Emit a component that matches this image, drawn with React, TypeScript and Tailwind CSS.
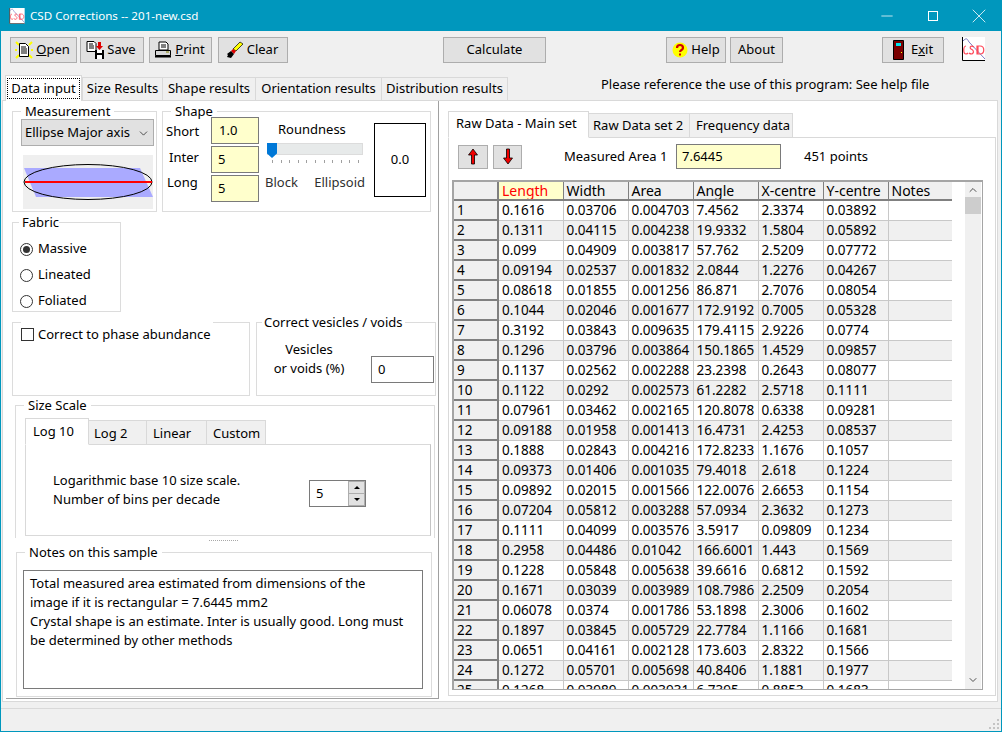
import { ChevronDown, ChevronUp, Minus, X } from "lucide-react";
import type { ReactNode } from "react";

const font = "font-['Noto_Sans','Open_Sans',sans-serif]";

const columns = ["Length", "Width", "Area", "Angle", "X-centre", "Y-centre", "Notes"];

const rows = [
  ["0.1616", "0.03706", "0.004703", "7.4562", "2.3374", "0.03892"],
  ["0.1311", "0.04115", "0.004238", "19.9332", "1.5804", "0.05892"],
  ["0.099", "0.04909", "0.003817", "57.762", "2.5209", "0.07772"],
  ["0.09194", "0.02537", "0.001832", "2.0844", "1.2276", "0.04267"],
  ["0.08618", "0.01855", "0.001256", "86.871", "2.7076", "0.08054"],
  ["0.1044", "0.02046", "0.001677", "172.9192", "0.7005", "0.05328"],
  ["0.3192", "0.03843", "0.009635", "179.4115", "2.9226", "0.0774"],
  ["0.1296", "0.03796", "0.003864", "150.1865", "1.4529", "0.09857"],
  ["0.1137", "0.02562", "0.002288", "23.2398", "0.2643", "0.08077"],
  ["0.1122", "0.0292", "0.002573", "61.2282", "2.5718", "0.1111"],
  ["0.07961", "0.03462", "0.002165", "120.8078", "0.6338", "0.09281"],
  ["0.09188", "0.01958", "0.001413", "16.4731", "2.4253", "0.08537"],
  ["0.1888", "0.02843", "0.004216", "172.8233", "1.1676", "0.1057"],
  ["0.09373", "0.01406", "0.001035", "79.4018", "2.618", "0.1224"],
  ["0.09892", "0.02015", "0.001566", "122.0076", "2.6653", "0.1154"],
  ["0.07204", "0.05812", "0.003288", "57.0934", "2.3632", "0.1273"],
  ["0.1111", "0.04099", "0.003576", "3.5917", "0.09809", "0.1234"],
  ["0.2958", "0.04486", "0.01042", "166.6001", "1.443", "0.1569"],
  ["0.1228", "0.05848", "0.005638", "39.6616", "0.6812", "0.1592"],
  ["0.1671", "0.03039", "0.003989", "108.7986", "2.2509", "0.2054"],
  ["0.06078", "0.0374", "0.001786", "53.1898", "2.3006", "0.1602"],
  ["0.1897", "0.03845", "0.005729", "22.7784", "1.1166", "0.1681"],
  ["0.0651", "0.04161", "0.002128", "173.603", "2.8322", "0.1566"],
  ["0.1272", "0.05701", "0.005698", "40.8406", "1.1881", "0.1977"],
  ["0.1268", "0.03989", "0.003931", "6.7395", "0.8853", "0.1683"],
];

function OpenIcon() {
  return (
    <svg width="18" height="18" viewBox="0 0 18 18">
      <path d="M1 1l3 3M17 1l-3 3M1 17l3-3M17 17l-3-3M0 9h2M16 9h2" stroke="#ffff00" strokeWidth="2" />
      <path d="M4.500 2.500h6l3 3v10h-9z" fill="#fff" stroke="#000" />
      <path d="M6 6h5M6 8h6M6 10h6M6 12h6" stroke="#000" />
    </svg>
  );
}

function SaveIcon() {
  return (
    <svg width="18" height="18" viewBox="0 0 18 18">
      <path d="M1 0.500h7l2 2v8H1z" fill="#fff" stroke="#000" />
      <path d="M3 3h4M3 5h5M3 7h5" stroke="#000" />
      <path d="M9 9h9v9H9z" fill="#000" />
      <path d="M11 9h5v3h-5zM11 14h5v4h-5z" fill="#fff" />
      <path d="M12 1h3v4h2l-3.500 4L10 5h2z" fill="#e00000" />
    </svg>
  );
}

function PrintIcon() {
  return (
    <svg width="18" height="18" viewBox="0 0 18 18">
      <path d="M5 1h7l2 2v6H5z" fill="#fff" stroke="#000" />
      <path d="M7 4h5M7 6h5" stroke="#000" />
      <path d="M1.500 9.500h15v5h-15z" fill="#d8d8d8" stroke="#000" />
      <path d="M1 15.500h16" stroke="#000" strokeWidth="2" />
      <path d="M12 11h3" stroke="#808000" />
    </svg>
  );
}

function ClearIcon() {
  return (
    <svg width="18" height="18" viewBox="0 0 18 18">
      <path d="M14 1l3 2-7 7-3-2z" fill="#ffff00" stroke="#000" strokeWidth="0.7" />
      <path d="M7 8l3 2-2 3-3-3z" fill="#e00000" />
      <path d="M5 10l3 3-3 4-4-1 1-2-1-1z" fill="#000" />
    </svg>
  );
}

function HelpIcon() {
  return (
    <svg width="16" height="16" viewBox="0 0 16 16">
      <circle cx="8" cy="8" r="7.500" fill="#ffff00" />
      <path d="M5 6c0-4 6-4 6 0 0 2-3 2-3 4" fill="none" stroke="#d00000" strokeWidth="2.200" />
      <path d="M7 11.500h2v2H7z" fill="#d00000" />
    </svg>
  );
}

function ExitIcon() {
  return (
    <svg width="11" height="20" viewBox="0 0 11 20">
      <path d="M0.500 0.500h10v19h-10z" fill="#7a0000" stroke="#000" />
      <path d="M3 3h5v3H3z" fill="#00e8f0" />
      <path d="M8 12h1v1H8z" fill="#ffff00" />
    </svg>
  );
}

function CsdLogo({ small }: { small?: boolean }) {
  return (
    <svg width={small ? 16 : 23} height={small ? 16 : 24} viewBox="0 0 23 24">
      <path d="M0 0h23v24H0z" fill="#fff" />
      <path d="M0.500 0v23.500H23" fill="none" stroke="#000" />
      <path d="M1 4c3-3 4-3 6 1l16 17" fill="none" stroke="#7a7ac0" />
      <path d="M4 9c-3 0-3 8 0 8 1 0 2-1 2-1M12 10c-3-2-5 0-3 2 2 1 4 3 1 5-1 0-2 0-3-1M15 9h3c5 0 5 8 0 8h-3zM16 9v8" fill="none" stroke="#ff4a5a" strokeWidth="1.200" />
    </svg>
  );
}

function Measurement() {
  return (
    <svg width="130" height="54" viewBox="0 0 130 54">
      <path d="M0 0h130v54H0z" fill="#efefef" />
      <path d="M1 13h116l13 29H13z" fill="#aaaaff" />
      <ellipse cx="65" cy="27" rx="64" ry="17.500" fill="none" stroke="#000" />
      <path d="M2 27h127" stroke="#ff0000" strokeWidth="2" />
    </svg>
  );
}

function ArrowIcon({ down }: { down?: boolean }) {
  return (
    <svg width="10" height="17" viewBox="0 0 10 17">
      <path d={down ? "M3.500 1h3v9H9.500L5 16 0.500 10h3z" : "M5 1l4.500 6h-3v9h-3V7h-3z"} fill="#f00000" stroke="#000" strokeWidth="0.800" />
    </svg>
  );
}

function ToolButton({ className, children }: { className: string; children: ReactNode }) {
  return (
    <button className={`h-[26px] flex items-center justify-center gap-[3px] bg-[#e1e1e1] border border-[#adadad] shrink-0 ${className}`}>
      {children}
    </button>
  );
}

function Group({ title, className, titleClass, children }: { title?: string; className: string; titleClass?: string; children: ReactNode }) {
  return (
    <fieldset className={`border border-[#dcdcdc] min-w-0 shrink-0 ${className}`}>
      <legend className={`leading-[18px] h-[18px] px-1 ${titleClass ?? "ml-2"}`}>{title}</legend>
      {children}
    </fieldset>
  );
}

function Field({ value, className }: { value: string; className: string }) {
  return (
    <div className={`border border-[#7a7a7a] flex items-center ${className}`}>{value}</div>
  );
}

function Radio({ label, checked }: { label: string; checked?: boolean }) {
  return (
    <div className="h-[26px] flex items-center gap-[5px] pl-[7px]">
      <span className="w-[13px] h-[13px] rounded-full border border-[#333] flex items-center justify-center">
        {checked && <span className="w-[7px] h-[7px] rounded-full bg-[#333]" />}
      </span>
      {label}
    </div>
  );
}

function TopTab({ label, className, active }: { label: string; className: string; active?: boolean }) {
  return active ? (
    <div className={`h-[26px] -mb-px bg-white border border-b-0 border-[#d9d9d9] flex items-center justify-center z-10 ${className}`}>
      <span className="border border-dotted border-black px-[3px] leading-[19px]">{label}</span>
    </div>
  ) : (
    <div className={`h-[23px] bg-[#f0f0f0] border border-b-0 border-[#d9d9d9] flex items-center justify-center ${className}`}>
      {label}
    </div>
  );
}

function SubTab({ label, className, active }: { label: string; className: string; active?: boolean }) {
  return (
    <div className={`border border-[#d9d9d9] flex items-center whitespace-nowrap ${active ? "h-[27px] -mb-px border-b-white bg-white z-10 pb-[2px]" : "h-[24px] border-b-0 bg-[#f0f0f0]"} ${className}`}>
      {label}
    </div>
  );
}

function LeftPanel() {
  return (
    <div className="w-[433px] ml-[3px] shrink-0 border-r border-b border-[#a0a0a0] pl-[6px] pt-[1px] h-[598px]">
      <div className="flex gap-[5px]">
        <Group title="Measurement" className="w-[145px] h-[110px] pl-[8px]" titleClass="ml-0">
          <div className="w-[133px] h-[27px] -mt-[1px] pt-px bg-[#e1e1e1] border border-[#adadad] flex items-center justify-between pl-[3px] pr-[3px]">
            Ellipse Major axis
            <ChevronDown size={13} strokeWidth={1.2} />
          </div>
          <div className="mt-[9px] ml-[2px]"><Measurement /></div>
        </Group>
        <Group title="Shape" className="w-[269px] h-[110px]" titleClass="ml-[8px]">
          <div className="flex">
            <div className="w-[48px] pl-[3px] -mt-[2px]">
              <div className="h-[26px] leading-[26px]">Short</div>
              <div className="h-[26px] leading-[26px] pl-[3px]">Inter</div>
              <div className="h-[26px] leading-[24px] pl-[1px]">Long</div>
            </div>
            <div className="w-[48px] -mt-[3px]">
              <Field value="1.0" className="h-[27px] bg-[#ffffcc] pl-[7px] mb-[2px]" />
              <Field value="5" className="h-[27px] bg-[#ffffcc] pl-[6px] mb-[2px]" />
              <Field value="5" className="h-[27px] bg-[#ffffcc] pl-[6px]" />
            </div>
            <div className="w-[115px] pl-[6px] -mt-[3px]">
              <div className="pl-[13px] leading-[24px]">Roundness</div>
              <div className="relative h-[12px] w-[96px] ml-[2px] bg-[#e7eaea] border border-[#dcdcdc] mt-[2px]">
                <span className="absolute -left-px -top-[1px] w-[10px] h-[15px] bg-[#0078d7] [clip-path:polygon(0_0,100%_0,100%_70%,50%_100%,0_70%)]" />
              </div>
              <div className="flex justify-between w-[87px] ml-[7px] mt-[5px]">
                {Array.from({ length: 11 }, (_, i) => (
                  <span key={i} className="w-px h-[3px] bg-[#a0a0a0]" />
                ))}
              </div>
              <div className="flex justify-between w-[100px] mt-[10px] text-[#303030]">
                <span>Block</span>
                <span>Ellipsoid</span>
              </div>
            </div>
            <div className="w-[52px] h-[74px] border border-black flex items-center justify-center mt-[3px]">0.0</div>
          </div>
        </Group>
      </div>

      <div className="mt-[1px]">
        <Group title="Fabric" className="w-[109px] h-[99px]" titleClass="ml-[6px] pl-[3px] pr-0">
          <div className="mt-[5px]">
            <Radio label="Massive" checked />
            <Radio label="Lineated" />
            <Radio label="Foliated" />
          </div>
        </Group>
      </div>

      <div className="flex gap-[6px] mt-[1px]">
        <Group className="w-[238px] h-[83px]" titleClass="ml-[8px] w-[192px]">
          <div className="flex items-center gap-[4px] pl-[8px] -mt-[6px]">
            <span className="w-[13px] h-[13px] border border-[#333]" />
            Correct to phase abundance
          </div>
        </Group>
        <Group title="Correct vesicles / voids" className="w-[180px] h-[83px]" titleClass="ml-[5px] px-[2px]">
          <div className="flex">
            <div className="w-[104px] text-center leading-[19px] pt-[9px]">
              <div>Vesicles</div>
              <div>or voids (%)</div>
            </div>
            <Field value="0" className="w-[63px] h-[27px] pl-[6px] mt-[25px] ml-[10px]" />
          </div>
        </Group>
      </div>

      <div className="ml-[3px]">
        <fieldset className="w-[420px] h-[142px] border border-b-0 border-[#dcdcdc] pl-[9px]">
          <legend className="-ml-px px-1 leading-[18px] h-[18px]">Size Scale</legend>
          <div className="flex h-[26px] items-end mt-[4px]">
            <SubTab label="Log 10" active className="w-[64px] pl-[7px] pt-[2px]" />
            <SubTab label="Log 2" className="w-[59px] -ml-px pl-[5px] pt-[2px]" />
            <SubTab label="Linear" className="w-[61px] -ml-px pl-[6px] pt-[2px]" />
            <SubTab label="Custom" className="w-[60px] -ml-px pl-[6px] pt-[2px]" />
          </div>
          <div className="w-[406px] h-[92px] border border-[#d9d9d9] border-r-[#c4c4c4] flex pl-[27px] pt-[26px]">
            <div className="w-[256px] leading-[19px]">
              <div>Logarithmic base 10 size scale.</div>
              <div>Number of bins per decade</div>
            </div>
            <div className="w-[57px] h-[27px] border border-[#7a7a7a] flex justify-between items-center pl-[6px] mt-[9px]">
              5
              <div className="w-[17px] h-full flex flex-col gap-px bg-[#adadad] p-px">
                <span className="flex-1 bg-[#e1e1e1] flex items-center justify-center">
                  <span className="border-x-[3px] border-x-transparent border-b-[3px] border-b-black" />
                </span>
                <span className="flex-1 bg-[#e1e1e1] flex items-center justify-center">
                  <span className="border-x-[3px] border-x-transparent border-t-[3px] border-t-black" />
                </span>
              </div>
            </div>
          </div>
        </fieldset>
      </div>
      <div className="h-[5px] flex justify-center items-center w-[420px] ml-[1px]">
        <span className="w-[29px] border-t border-dotted border-[#a8a8a8]" />
      </div>
      <div className="ml-[4px]">
        <fieldset className="w-[416px] h-[154px] border border-[#dcdcdc] pl-[6px]">
          <legend className="ml-[2px] px-1 leading-[18px] h-[18px]">Notes on this sample</legend>
          <div className="w-[400px] h-[119px] border border-[#7a7a7a] px-[6px] pt-[3px] leading-[19px] mt-[9px]">
            <div>Total measured area estimated from dimensions of the</div>
            <div>image if it is rectangular = 7.6445 mm2</div>
            <div>Crystal shape is an estimate. Inter is usually good. Long must</div>
            <div>be determined by other methods</div>
          </div>
        </fieldset>
      </div>
    </div>
  );
}

function DataGrid() {
  return (
    <div className="mx-[3px] mt-[8px] w-[531px] h-[510px] border-2 border-[#a5a5a5] border-r border-b flex overflow-hidden text-[13.5px]">
      <div className="w-[498px] shrink-0 overflow-hidden">
        <table className="table-fixed border-collapse w-[498px] leading-[17px] -mt-px">
          <colgroup>
            <col className="w-[44px]" />
            <col className="w-[65px]" />
            <col className="w-[65px]" />
            <col className="w-[65px]" />
            <col className="w-[65px]" />
            <col className="w-[65px]" />
            <col className="w-[65px]" />
            <col className="w-[64px]" />
          </colgroup>
          <thead>
            <tr className="h-[19px] border-b-2 border-[#808080]">
              <th className="bg-[#f0f0f0] border-r-2 border-[#808080]" />
              {columns.map((c) => (
                <th
                  key={c}
                  className={`font-normal text-[14px] text-left pl-[3px] border-r border-[#808080] whitespace-nowrap overflow-hidden ${c === "Length" ? "bg-[#ffffcc] text-[#ff0000]" : "bg-[#f0f0f0]"}`}
                >
                  {c}
                </th>
              ))}
            </tr>
          </thead>
          <tbody>
            {rows.map((r, i) => (
              <tr key={i} className={`h-[20px] border-b border-[#c8c8c8] ${i % 2 === 1 ? "bg-[#f0f0f0]" : "bg-white"}`}>
                <td className="bg-[#f0f0f0] border-r-2 border-b-2 border-[#808080] pl-[3px]">{i + 1}</td>
                {r.map((v, j) => (
                  <td key={j} className="pl-[3px] border-r border-[#c8c8c8] whitespace-nowrap overflow-hidden">{v}</td>
                ))}
                <td className="border-r border-[#c8c8c8]" />
              </tr>
            ))}
          </tbody>
        </table>
      </div>
      <div className="flex-1 flex justify-end pr-[1px] bg-white">
        <div className="w-[16px] h-full bg-[#f0f0f0] flex flex-col items-center">
          <ChevronUp size={12} strokeWidth={2} className="mt-[2px] text-[#505050]" />
          <div className="w-full h-[17px] bg-[#cdcdcd] mt-[1px]" />
          <div className="flex-1" />
          <ChevronDown size={12} strokeWidth={2} className="mb-[3px] text-[#505050]" />
        </div>
      </div>
    </div>
  );
}

function RightPanel() {
  return (
    <div className="flex-1 pl-[9px] pt-[9px] h-[598px]">
      <div className="flex items-end h-[27px]">
        <SubTab label="Raw Data - Main set" active className="w-[141px] pl-[7px]" />
        <SubTab label="Raw Data set 2" className="w-[102px] -ml-px pl-[4px]" />
        <SubTab label="Frequency data" className="w-[104px] -ml-px pl-[6px]" />
      </div>
      <div className="w-[548px] h-[559px] border border-[#d9d9d9] bg-white">
        <div className="flex items-center h-[31px] mt-[3px] pl-[9px]">
          <button className="w-[30px] h-[24px] bg-[#e1e1e1] border border-[#adadad] flex items-center justify-center"><ArrowIcon /></button>
          <button className="w-[29px] h-[24px] ml-[5px] bg-[#e1e1e1] border border-[#adadad] flex items-center justify-center"><ArrowIcon down /></button>
          <span className="ml-[42px] w-[112px]">Measured Area 1</span>
          <Field value="7.6445" className="w-[105px] h-[25px] bg-[#ffffcc] pl-[5px]" />
          <span className="ml-[23px]">451 points</span>
        </div>
        <DataGrid />
      </div>
    </div>
  );
}

export default function App() {
  return (
    <div className={`w-[1002px] h-[732px] bg-[#f0f0f0] border border-t-0 border-[#0097bd] overflow-hidden text-[13px] text-black ${font}`}>
      <div className="h-[31px] -mx-px bg-[#0097bd] flex items-center text-white pl-[9px]">
        <CsdLogo small />
        <span className="ml-[5px] text-[11.6px]">CSD Corrections -- 201-new.csd</span>
        <div className="ml-auto flex items-center">
          <span className="w-[46px] flex justify-center"><Minus size={18} strokeWidth={1} /></span>
          <span className="w-[46px] flex justify-center"><span className="w-[10px] h-[10px] border border-white" /></span>
          <span className="w-[46px] flex justify-center"><X size={24} strokeWidth={0.8} /></span>
        </div>
      </div>

      <div className="h-[42px] flex items-center pl-[9px] pb-[8px] pt-[4px]">
        <ToolButton className="w-[67px] pr-[2px]"><OpenIcon /><span><u>O</u>pen</span></ToolButton>
        <ToolButton className="w-[64px] ml-[3px] pr-[2px]"><SaveIcon /><span>Save</span></ToolButton>
        <ToolButton className="w-[63px] ml-[5px] pr-[2px]"><PrintIcon /><span><u>P</u>rint</span></ToolButton>
        <ToolButton className="w-[70px] ml-[6px] pr-[2px]"><ClearIcon /><span>Clear</span></ToolButton>
        <ToolButton className="w-[103px] ml-[155px]">Calculate</ToolButton>
        <ToolButton className="w-[60px] ml-[120px]"><HelpIcon /><span>Help</span></ToolButton>
        <ToolButton className="w-[53px] ml-[4px]">About</ToolButton>
        <ToolButton className="w-[62px] ml-[99px]"><ExitIcon /><span className="ml-[4px]">E<u>x</u>it</span></ToolButton>
        <span className="ml-[18px] -mt-[2px]"><CsdLogo /></span>
      </div>

      <div className="flex items-end h-[27px] pl-[4px]">
        <TopTab label="Data input" active className="w-[77px]" />
        <TopTab label="Size Results" className="w-[81px]" />
        <TopTab label="Shape results" className="w-[94px] -ml-px" />
        <TopTab label="Orientation results" className="w-[127px] -ml-px" />
        <TopTab label="Distribution results" className="w-[127px] -ml-px" />
        <span className="ml-[93px] self-center -mt-[3px]">Please reference the use of this program: See help file</span>
      </div>

      <div className="w-[996px] ml-[1px] h-[602px] bg-white border border-[#d9d9d9] flex">
        <LeftPanel />
        <RightPanel />
      </div>

      <div className="mt-[6px] h-[23px] border-t border-[#d9d9d9] flex justify-end items-end pr-px pb-px">
        <svg width="11" height="11" viewBox="0 0 11 11">
          <path d="M8 0h2v2H8zM4 4h2v2H4zM8 4h2v2H8zM0 8h2v2H0zM4 8h2v2H4zM8 8h2v2H8z" fill="#c4c4c4" />
        </svg>
      </div>
    </div>
  );
}
